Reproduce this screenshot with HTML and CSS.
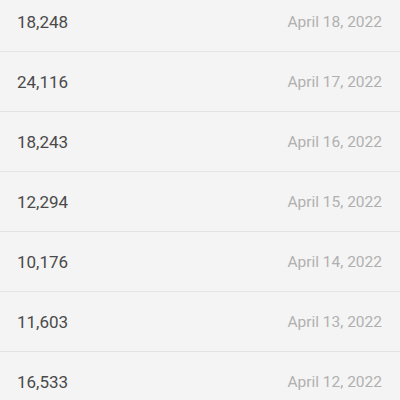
FILE: index.html
```html
<!DOCTYPE html>
<html>
<head>
<meta charset="UTF-8">
<title>Daily Steps</title>
<link rel="stylesheet" href="styles.css">
</head>
<body>
<div id="history-list">
    <div class="history-row"><span class="steps">18,248</span><span class="date">April 18, 2022</span></div>
    <div class="history-row"><span class="steps">24,116</span><span class="date">April 17, 2022</span></div>
    <div class="history-row"><span class="steps">18,243</span><span class="date">April 16, 2022</span></div>
    <div class="history-row"><span class="steps">12,294</span><span class="date">April 15, 2022</span></div>
    <div class="history-row"><span class="steps">10,176</span><span class="date">April 14, 2022</span></div>
    <div class="history-row"><span class="steps">11,603</span><span class="date">April 13, 2022</span></div>
    <div class="history-row"><span class="steps">16,533</span><span class="date">April 12, 2022</span></div>
</div>
</body>
</html>
```

FILE: styles.css
```css
html, body {
    margin: 0;
    padding: 0;
    height: 100%;
    overflow: hidden;
}

body {
    font-family: Roboto, "Noto Sans", sans-serif;
    background-color: #F4F4F4;
}

#history-list {
    margin-top: -8px;
}

.history-row {
    display: flex;
    align-items: center;
    justify-content: space-between;
    height: 59px;
    padding: 0px 18px 0px 17px;
    border-bottom: 1px solid #E4E4E4;
}

.steps {
    font-size: 17px;
    color: #4A4A4A;
}

.date {
    font-size: 15.5px;
    color: #B0B0B0;
}
```
